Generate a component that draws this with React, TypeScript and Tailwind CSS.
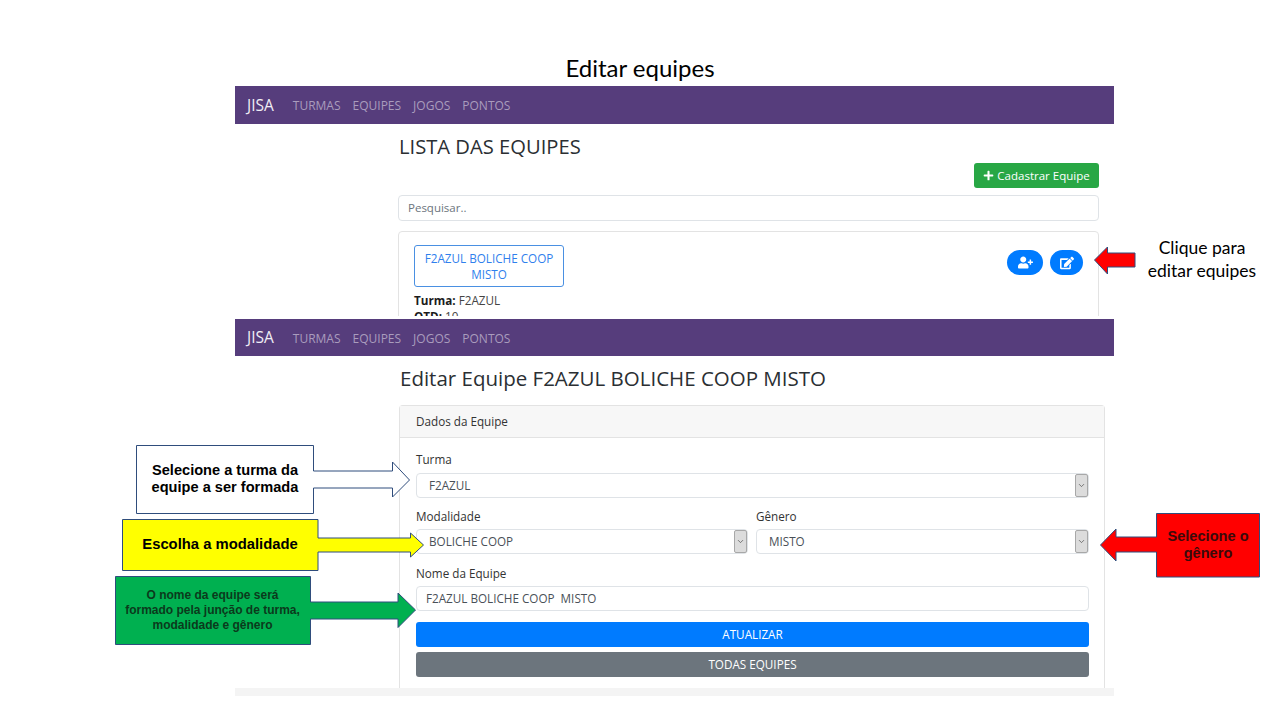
import React from "react";
import { FaPlus, FaUserPlus, FaEdit } from "react-icons/fa";
import { ChevronDown } from "lucide-react";

const navLinks = ["TURMAS", "EQUIPES", "JOGOS", "PONTOS"];

function Navbar({ className }: { className: string }) {
  return (
    <div className={`flex items-center bg-[#563d7c] pl-[12px] pt-[1px] ${className}`}>
      <span className="text-[15.5px] text-[#f1eef5] mr-[19px]">JISA</span>
      <div className="flex gap-[12px] mt-[1px] text-[12px] text-[#a99cbd]">
        {navLinks.map((link) => (
          <span key={link}>{link}</span>
        ))}
      </div>
    </div>
  );
}

function FakeSelect({ value, className }: { value: string; className: string }) {
  return (
    <div className={`flex items-center h-[25px] border border-[#dfe3e7] rounded-[4px] pl-[12px] bg-white ${className}`}>
      <span className="flex-1 text-[11.7px] text-[#495057]">{value}</span>
      <span className="flex items-center justify-center w-[13px] h-[23px] bg-[#dcdcdc] border border-[#a8a8a8] rounded-[2px]">
        <ChevronDown size={9} className="text-[#555]" />
      </span>
    </div>
  );
}

function FieldLabel({ text, className }: { text: string; className: string }) {
  return <div className={`h-[16px] leading-[16px] text-[11.7px] text-[#333] ${className}`}>{text}</div>;
}

function Callouts() {
  return (
    <>
      <svg className="absolute left-0 top-0 pointer-events-none" width="1280" height="720" viewBox="0 0 1280 720">
        <polygon
          points="136.5,445.5 313.5,445.5 313.5,471 392.5,471 392.5,462 409.5,480 392.5,497 392.5,488 313.5,488 313.5,513.5 136.5,513.5"
          fill="#ffffff"
          stroke="#2f4d7c"
        />
        <polygon
          points="122.5,519.5 318,519.5 318,538 410.5,538 410.5,533 423.5,545 410.5,557 410.5,552 318,552 318,570.5 122.5,570.5"
          fill="#ffff00"
          stroke="#2f4d7c"
        />
        <polygon
          points="115.5,576.5 310.5,576.5 310.5,602 398,602 398,593 415.5,610 398,627.5 398,619 310.5,619 310.5,644.5 115.5,644.5"
          fill="#00b050"
          stroke="#2f4d7c"
        />
        <polygon
          points="1259.5,513.5 1156.5,513.5 1156.5,537 1116,537 1116,529 1100.5,545 1116,561 1116,552 1156.5,552 1156.5,577 1259.5,577"
          fill="#ff0000"
          stroke="#2f4d7c"
        />
        <polygon
          points="1094.5,260 1107.5,247 1107.5,253 1135,253 1135,267 1107.5,267 1107.5,274"
          fill="#ff0000"
          stroke="#2f4d7c"
        />
      </svg>

      <div className="absolute left-[136px] top-[445px] w-[178px] h-[68px] flex items-center justify-center text-center font-['Liberation_Sans',sans-serif] font-bold text-[14.6px] leading-[17.5px] text-black">
        Selecione a turma da
        <br />
        equipe a ser formada
      </div>
      <div className="absolute left-[122px] top-[519px] w-[196px] h-[51px] flex items-center justify-center font-['Liberation_Sans',sans-serif] font-bold text-[14.8px] text-black">
        Escolha a modalidade
      </div>
      <div className="absolute left-[115px] top-[576px] w-[195px] h-[68px] flex items-center justify-center text-center font-['Liberation_Sans',sans-serif] font-bold text-[12px] leading-[15px] text-[#0b3a1c]">
        O nome da equipe será
        <br />
        formado pela junção de turma,
        <br />
        modalidade e gênero
      </div>
      <div className="absolute left-[1156px] top-[513px] w-[104px] h-[64px] flex items-center justify-center text-center font-['Liberation_Sans',sans-serif] font-bold text-[14.6px] leading-[17px] text-[#3a0a0a]">
        Selecione o
        <br />
        gênero
      </div>
      <div className="absolute left-[1135px] top-[236px] w-[134px] text-center font-['Lato',sans-serif] text-[17.5px] leading-[23px] text-black">
        Clique para
        <br />
        editar equipes
      </div>
    </>
  );
}

export default function App() {
  return (
    <div className="relative w-[1280px] h-[720px] bg-white overflow-hidden font-['Open_Sans',sans-serif]">
      <h1 className="pt-[52px] mb-[2px] h-[84px] text-center font-['Lato',sans-serif] text-[24px] leading-[32px] text-black">
        Editar equipes
      </h1>

      <div className="ml-[235px] w-[879px]">
        {/* lista */}
        <div className="h-[233px]">
          <Navbar className="h-[38px]" />
          <div className="pl-[163px] pr-[15px] h-[192px] overflow-hidden">
            <h2 className="pt-[8px] h-[36px] text-[20.2px] leading-[28px] text-[#2b2f33] ml-[1px]">LISTA DAS EQUIPES</h2>
            <div className="flex justify-end mt-[3px]">
              <div className="flex items-center justify-center gap-[3px] w-[125px] h-[25px] rounded-[3px] bg-[#28a745] text-[11.5px] text-white">
                <FaPlus size={11} />
                Cadastrar Equipe
              </div>
            </div>
            <div className="flex items-center mt-[7px] h-[26px] border border-[#dfe3e7] rounded-[4px] pl-[9px] text-[11.5px] text-[#6c757d]">
              Pesquisar..
            </div>
            <div className="mt-[10px] h-[120px] border border-[#e3e3e3] rounded-[4px] pt-[13px] pl-[15px] pr-[15px] flex justify-between">
              <div>
                <div className="flex items-center justify-center w-[150px] h-[42px] border border-[#4a90e2] rounded-[3px] text-center text-[11.7px] leading-[16px] text-[#2f80ed]">
                  <span>
                    F2AZUL BOLICHE COOP
                    <br />
                    MISTO
                  </span>
                </div>
                <p className="mt-[5px] text-[11.7px] leading-[16px] text-[#444]">
                  <b className="text-[#1c1c1c]">Turma:</b> F2AZUL
                </p>
                <p className="text-[11.7px] leading-[16px] text-[#444]">
                  <b className="text-[#1c1c1c]">QTD:</b> 10
                </p>
              </div>
              <div className="flex gap-[7px] mt-[5px]">
                <div className="flex items-center justify-center w-[36px] h-[25px] rounded-full bg-[#007bff] text-white">
                  <FaUserPlus size={15} />
                </div>
                <div className="flex items-center justify-center w-[33px] h-[25px] rounded-full bg-[#007bff] text-white">
                  <FaEdit size={14} />
                </div>
              </div>
            </div>
          </div>
        </div>

        {/* editar */}
        <Navbar className="h-[37px]" />
        <h2 className="pl-[165px] pt-[8px] h-[49px] text-[20.5px] leading-[28px] text-[#2b2f33]">
          Editar Equipe F2AZUL BOLICHE COOP MISTO
        </h2>
        <div className="ml-[164px] w-[706px] border-x border-t border-[#e3e3e3] rounded-t-[4px]">
          <div className="flex items-center h-[32px] pl-[16px] bg-[#f7f7f7] border-b border-[#e3e3e3] text-[11.7px] text-[#333]">
            Dados da Equipe
          </div>
          <div className="pl-[16px] pr-[15px] pt-[13px] pb-[11px]">
            <FieldLabel text="Turma" className="" />
            <FakeSelect value="F2AZUL" className="mt-[6px]" />
            <div className="flex gap-[8px]">
              <div className="w-[332px]">
                <FieldLabel text="Modalidade" className="mt-[10px]" />
                <FakeSelect value="BOLICHE COOP" className="mt-[5px]" />
              </div>
              <div className="flex-1">
                <FieldLabel text="Gênero" className="mt-[10px]" />
                <FakeSelect value="MISTO" className="mt-[5px]" />
              </div>
            </div>
            <FieldLabel text="Nome da Equipe" className="mt-[11px]" />
            <div className="flex items-center mt-[5px] h-[25px] border border-[#dfe3e7] rounded-[4px] pl-[9px] text-[11.7px] text-[#495057] whitespace-pre">
              F2AZUL BOLICHE COOP  MISTO
            </div>
            <div className="flex items-center justify-center mt-[11px] h-[25px] rounded-[3px] bg-[#007bff] text-[11.7px] text-white">
              ATUALIZAR
            </div>
            <div className="flex items-center justify-center mt-[5px] h-[25px] rounded-[3px] bg-[#6c757d] text-[11.7px] text-white">
              TODAS EQUIPES
            </div>
          </div>
        </div>
        <div className="h-[8px] bg-[#f4f4f4]" />
      </div>

      <Callouts />
    </div>
  );
}
